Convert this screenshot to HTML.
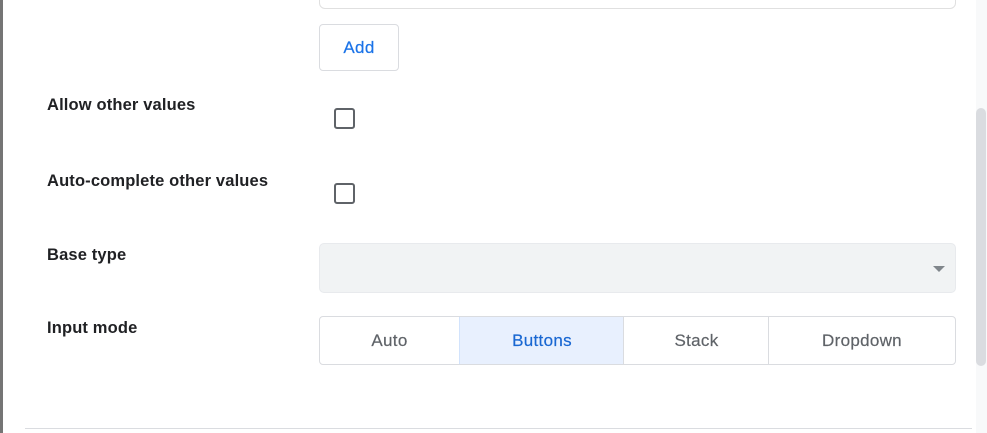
<!DOCTYPE html>
<html><head><style>
body{margin:0;width:987px;height:433px;background:#fff;position:relative;overflow:hidden;font-family:"Liberation Sans",Arial,sans-serif;}
.a{position:absolute;}
.lbl{position:absolute;left:47px;font-size:16.5px;font-weight:bold;color:#202124;letter-spacing:0.15px;}
.cb{position:absolute;left:334px;width:17px;height:17px;border:2px solid #5f6368;border-radius:3px;}
.seg{position:absolute;top:317px;height:47px;line-height:47px;text-align:center;font-size:17px;color:#5f6368;border-left:1px solid #dadce0;letter-spacing:0.3px;-webkit-text-stroke:0.2px currentColor;}
</style></head><body>
<div class="a" style="left:0;top:0;width:3px;height:433px;background:#757575"></div>
<div class="a" style="left:319px;top:-10px;width:635px;height:17px;border:1px solid #e0e0e0;border-radius:6px"></div>
<div class="a" style="left:319px;top:24px;width:78px;height:45px;border:1px solid #dadce0;border-radius:4px;text-align:center;line-height:45px;color:#1a73e8;font-size:17px;letter-spacing:0.3px;-webkit-text-stroke:0.2px #1a73e8">Add</div>
<div class="lbl" style="top:96px">Allow other values</div>
<div class="cb" style="top:108px"></div>
<div class="lbl" style="top:172px">Auto-complete other values</div>
<div class="cb" style="top:183px"></div>
<div class="lbl" style="top:246px">Base type</div>
<div class="a" style="left:319px;top:243px;width:635px;height:48px;background:#f1f3f4;border:1px solid #e8eaed;border-radius:5px"></div>
<div class="a" style="left:933px;top:266px;width:0;height:0;border-left:6px solid transparent;border-right:6px solid transparent;border-top:6px solid #80868b"></div>
<div class="lbl" style="top:319px">Input mode</div>
<div class="a" style="left:319px;top:316px;width:635px;height:47px;border:1px solid #dadce0;border-radius:4px"></div>
<div class="seg" style="left:320px;width:139px;border-left:none">Auto</div>
<div class="seg" style="left:459px;width:164px;background:#e8f0fe;color:#1967d2;border-left:1px solid #d2e3fc">Buttons</div>
<div class="seg" style="left:623px;width:145px">Stack</div>
<div class="seg" style="left:768px;width:186px">Dropdown</div>
<div class="a" style="left:25px;top:428px;width:947px;height:1px;background:#dadce0"></div>
<div class="a" style="left:976px;top:0;width:11px;height:433px;background:#f8f9fa"></div>
<div class="a" style="left:976px;top:108px;width:10px;height:258px;background:#dadce0;border-radius:5px"></div>
</body></html>
